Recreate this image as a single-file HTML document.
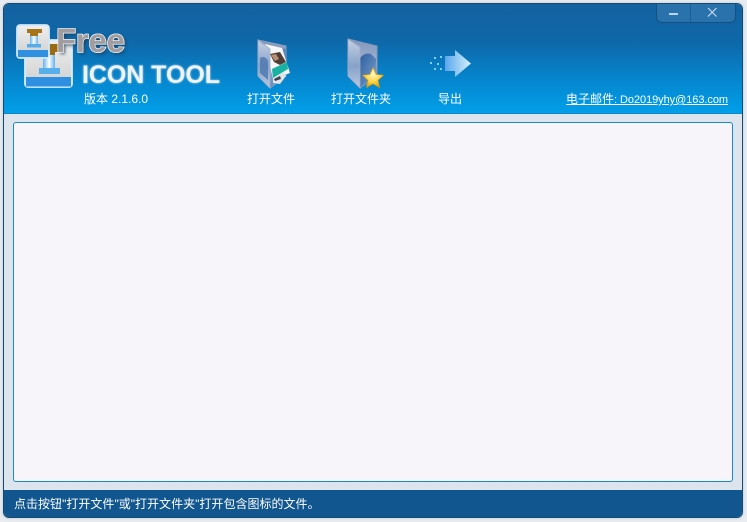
<!DOCTYPE html>
<html><head><meta charset="utf-8"><style>
html,body{margin:0;padding:0;width:747px;height:522px;overflow:hidden;background:#e9edf1}
body{position:relative;font-family:"Liberation Sans","WenQuanYi Zen Hei","Noto Sans CJK SC",sans-serif;color:#fff}
.abs{position:absolute}
.win{position:absolute;left:3px;top:3px;width:738px;height:513px;border:1px solid #174a73;border-radius:6px;background:#dce5ee;overflow:hidden;box-shadow:0 0 3px #b9c4ce}
.t{position:absolute;font-size:12px;line-height:14px;white-space:nowrap}
svg{position:absolute;overflow:visible}
</style></head><body>
<div class="win">
<div class="abs" style="left:0;top:0;width:738px;height:109px;background:linear-gradient(#14619f 0,#0e68a9 35%,#0588d0 72%,#019fe9 100%);border-bottom:1px solid #0c87c9"></div>
<div class="abs" style="left:9px;top:118px;width:718px;height:358px;background:#f7f5f9;border:1px solid #1a88cb;border-radius:3px"></div>
<div class="abs" style="left:0;top:486px;width:738px;height:27px;background:#11568f"></div>
<div class="abs" style="left:652px;top:-1px;width:78px;height:19px;background:#2a72ac;border:1px solid #125184;border-top:0;border-radius:0 0 6px 6px"></div>
<div class="abs" style="left:686px;top:0;width:1px;height:18px;background:#19609a"></div>
</div>
<svg style="left:0;top:0" width="747" height="522" viewBox="0 0 747 522">
<defs>
<linearGradient id="tile" x1="0" y1="0" x2="0" y2="1"><stop offset="0" stop-color="#efefef"/><stop offset="1" stop-color="#cfcfcf"/></linearGradient>
<linearGradient id="st" x1="0" y1="0" x2="1" y2="0"><stop offset="0" stop-color="#62b2ee"/><stop offset=".5" stop-color="#ffffff"/><stop offset="1" stop-color="#62b2ee"/></linearGradient>
<linearGradient id="fo" x1="0" y1="0" x2="0" y2="1"><stop offset="0" stop-color="#7f95ba"/><stop offset=".45" stop-color="#9fb1d0"/><stop offset="1" stop-color="#5f88bb"/></linearGradient>
<linearGradient id="fo2" x1="0" y1="0" x2="0" y2="1"><stop offset="0" stop-color="#c6d0e2"/><stop offset=".55" stop-color="#86a2ca"/><stop offset="1" stop-color="#b9c9e0"/></linearGradient>
<linearGradient id="blob" x1="0" y1="0" x2="1" y2="1"><stop offset="0" stop-color="#2f5f9f"/><stop offset=".6" stop-color="#5b86bb"/><stop offset="1" stop-color="#a9c0da"/></linearGradient>
<radialGradient id="star" cx=".5" cy=".35" r=".65"><stop offset="0" stop-color="#fff8c0"/><stop offset=".6" stop-color="#fbd23c"/><stop offset="1" stop-color="#e79a00"/></radialGradient>
<linearGradient id="arr" x1="0" y1="0" x2="1" y2="0"><stop offset="0" stop-color="#5aa6ec"/><stop offset="1" stop-color="#d4f0fb"/></linearGradient>
<filter id="b1"><feGaussianBlur stdDeviation="1.6"/></filter>
<filter id="b2"><feGaussianBlur stdDeviation="1"/></filter>
<filter id="b3"><feGaussianBlur stdDeviation=".3"/></filter>
</defs>
<!-- back tile -->
<rect x="25" y="40" width="47" height="47" rx="3" fill="url(#tile)" stroke="#d8ecfa" stroke-width="1.800"/>
<rect x="26" y="77" width="45" height="9.500" fill="#2f8fe0"/>
<path d="M49 44h9v8h-3v3h-5v-3h-1z" fill="#9a6a14"/>
<rect x="43" y="55" width="12" height="14" fill="url(#st)"/>
<rect x="39" y="68" width="21" height="6" fill="#58aeea"/>
<!-- front tile -->
<rect x="17" y="25" width="32" height="33" rx="3" fill="url(#tile)" stroke="#cfe7f8" stroke-width="1.800"/>
<rect x="18" y="50" width="30" height="7" fill="#2f8fe0"/>
<path d="M27 29h15v4h-4v3h-8v-3h-3z" fill="#a8741a"/>
<rect x="30" y="36" width="8" height="9" fill="url(#st)"/>
<rect x="27" y="44" width="14" height="3.500" fill="#55ace8"/>
<!-- Free -->
<text x="56" y="52" font-family="Liberation Sans" font-weight="bold" font-size="33" textLength="69" fill="#1c3a55" opacity=".8" filter="url(#b1)" dx="2" dy="2">Free</text>
<text x="56" y="52" font-family="Liberation Sans" font-weight="bold" font-size="33" textLength="69" fill="#a19c9f" stroke="#f4f4f4" stroke-width="1.500" paint-order="stroke">Free</text>
<text x="82" y="83" font-family="Liberation Sans" font-weight="bold" font-size="25" textLength="138" fill="#ffffff" opacity=".75" filter="url(#b2)">ICON TOOL</text>
<text x="82" y="83" font-family="Liberation Sans" font-weight="bold" font-size="25" textLength="138" fill="#eef3f6" filter="url(#b3)">ICON TOOL</text>
<!-- open file icon -->
<path d="M258 40l28 6v30l-16 12-12-12z" fill="url(#fo)" stroke="#8fa0bc" stroke-width="1"/>
<path d="M283 48l3 1v27l-3 1z" fill="#5f86b8"/>
<path d="M265 44l17 4 8 25-17 6z" fill="#f5f5f5"/>
<path d="M270 54l10-2 6 10-6 3-6-3z" fill="#4e3d34"/>
<path d="M271 55l5-1 3 5-4 2z" fill="#b98d72"/>
<path d="M272 69l15-7 1 7-15 9z" fill="#17b2a2"/>
<path d="M273 78l11-6 2 4-6 8-7-1z" fill="#e2e4e8"/>
<path d="M274 79l6-3 1 3-6 2z" fill="#39434f"/>
<path d="M258 40l12 9v39l-12-12z" fill="url(#fo2)" stroke="#a0afc9" stroke-width=".8"/>
<path d="M260 58q5-3 8 3v19l-8-7z" fill="#4d78b0" opacity=".8" filter="url(#b3)"/>
<!-- open folder icon -->
<path d="M348 39l29 7v30l-17 12-12-12z" fill="url(#fo)" stroke="#8798b5" stroke-width="1"/>
<path d="M360 87V58q5-6 11-4l5 5v17z" fill="url(#blob)" filter="url(#b3)"/>
<path d="M348 39l12 8v41l-12-12z" fill="url(#fo2)" stroke="#9dadc7" stroke-width=".8"/>
<path d="M373 67.500l3.100 7 7.400.7-5.500 5 1.600 7.300-6.600-3.800-6.600 3.800 1.600-7.300-5.500-5 7.400-.7z" fill="url(#star)" stroke="#dd9a10" stroke-width=".6"/>
<!-- export arrow -->
<path d="M445 56h10v-6l16 13.500-16 13.500v-6h-10z" fill="url(#arr)"/>
<g fill="#7fd0f2"><rect x="430" y="62" width="2" height="2"/><rect x="434" y="57" width="2" height="2"/><rect x="440" y="56" width="2" height="2"/><rect x="437" y="63" width="2" height="2"/><rect x="434" y="68" width="2" height="2"/><rect x="440" y="68" width="2" height="2"/></g>
<!-- min / close -->
<rect x="669" y="13" width="9" height="2" fill="#b9d3e8"/>
<path d="M708 8l8.500 8.500M716.500 8L708 16.500" stroke="#c3d8ea" stroke-width="1.200" fill="none"/>
</svg>
<div class="t" style="left:84px;top:92px">版本 2.1.6.0</div>
<div class="t" style="left:247px;top:92px">打开文件</div>
<div class="t" style="left:331px;top:92px">打开文件夹</div>
<div class="t" style="left:438px;top:92px">导出</div>
<div class="t" style="left:566px;top:92px;text-decoration:underline;font-size:12px">电子邮件<span style="font-size:11px;letter-spacing:-.06px">: Do2019yhy@163.com</span></div>
<div class="t" style="left:14px;top:497px;letter-spacing:.02px">点击按钮"打开文件"或"打开文件夹"打开包含图标的文件。</div>
</body></html>
